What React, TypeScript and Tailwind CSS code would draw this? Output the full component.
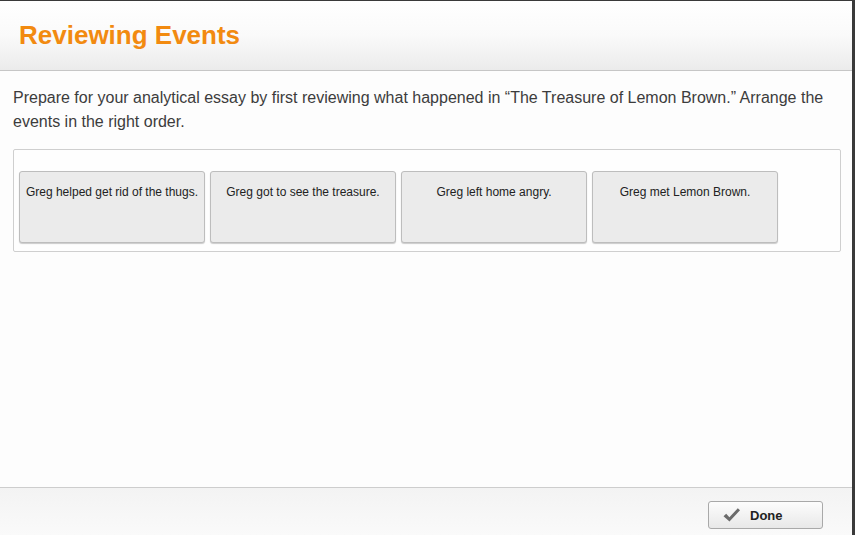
const events = [
  'Greg helped get rid of the thugs.',
  'Greg got to see the treasure.',
  'Greg left home angry.',
  'Greg met Lemon Brown.',
]

function CheckIcon() {
  return (
    <svg width="19" height="16" viewBox="0 0 19 16" className="shrink-0">
      <path
        d="M1.5 9.2 L4.2 6.8 L7.4 10.2 L15.8 1.2 L18 3.2 L7.5 14.6 Z"
        fill="#6b6b6b"
      />
    </svg>
  )
}

export default function App() {
  return (
    <div
      className="w-[855px] h-[535px] flex border-t border-[#3a3a3a] overflow-hidden"
      style={{ fontFamily: '"Liberation Sans", Arial, sans-serif' }}
    >
      <div className="flex-1 flex flex-col bg-[#fdfdfd]">
        <header className="h-[70px] shrink-0 flex items-center pl-[19px] pb-[2px] bg-gradient-to-b from-[#ffffff] via-[#fafafa] to-[#ebebeb] border-b border-[#c6c6c6]">
          <h1 className="text-[26px] font-bold text-[#f28a10] leading-none">
            Reviewing Events
          </h1>
        </header>

        <main className="flex-1 pl-[13px] pr-[11px] pt-[15px]">
          <p className="text-[16px] leading-[24px] text-[#3c3c3c] pr-[12px]">
            Prepare for your analytical essay by first reviewing what happened in “The
            Treasure of Lemon Brown.” Arrange the events in the right order.
          </p>

          <div className="mt-[15px] h-[103px] border border-[#cfcfcf] rounded-[2px] bg-[#fefefe] flex gap-[5px] pl-[5px] pt-[21px]">
            {events.map((text) => (
              <div
                key={text}
                className="w-[186px] h-[72px] bg-[#ebebeb] border border-[#bdbdbd] rounded-[3px] shadow-[0_1px_1px_rgba(0,0,0,0.2)] text-center text-[12px] text-[#222] pt-[13px] leading-[15px]"
              >
                {text}
              </div>
            ))}
          </div>
        </main>

        <footer className="h-[48px] shrink-0 border-t border-[#cdcdcd] bg-gradient-to-b from-[#f3f3f3] to-[#fafafa] flex items-start justify-end pr-[29px] pt-[13px]">
          <button className="w-[115px] h-[28px] flex items-center gap-[9px] pl-[13px] border border-[#a9a9a9] rounded-[3px] bg-gradient-to-b from-[#fdfdfd] to-[#e8e8e8] text-[13px] font-bold text-[#222]">
            <CheckIcon />
            <span className="pt-[2px]">Done</span>
          </button>
        </footer>
      </div>
      <div className="w-[3px] bg-[#3a3a3a] shrink-0" />
    </div>
  )
}
